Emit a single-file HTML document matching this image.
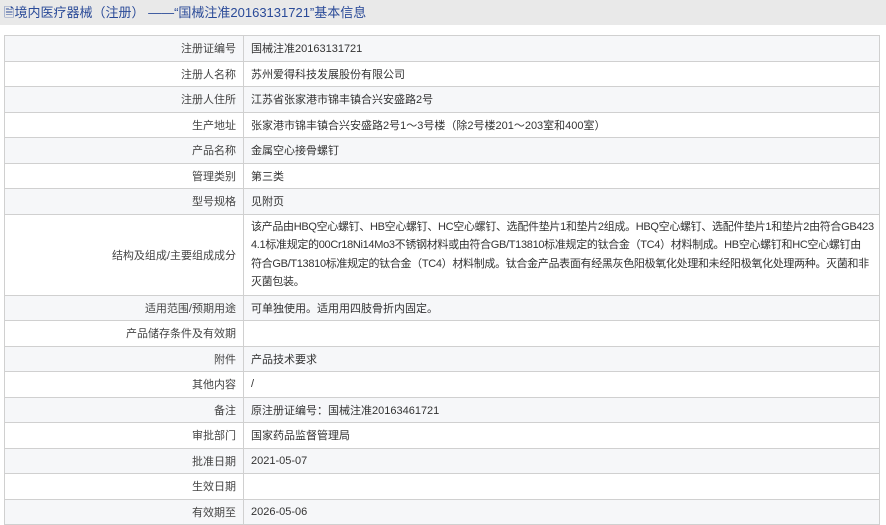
<!DOCTYPE html>
<html><head><meta charset="utf-8"><style>
body{margin:0;width:886px;height:524px;overflow:hidden;background:#fff;font-family:"Liberation Sans","Noto Sans CJK SC",sans-serif;}
.hd{height:25px;background:#e9e9e9;color:#2a4a98;font-size:13px;line-height:25px;padding-left:4px;}
table{position:absolute;left:4px;top:35px;width:876px;border-collapse:collapse;font-size:11px;color:#333;table-layout:fixed;}
td{border:1px solid #d0d0d0;height:24.5px;padding:0 7px;}
td.l{width:224px;text-align:right;color:#444;}
tr:nth-child(odd){background:#f6f7f9;}
td.m{line-height:18.5px;padding:3px 7px 3px 7px;white-space:nowrap;overflow:hidden;letter-spacing:-0.32px;}
</style></head><body>
<div class="hd">🗎境内医疗器械（注册） ——“国械注准20163131721”基本信息</div>
<table>
<tr><td class="l">注册证编号</td><td>国械注准20163131721</td></tr>
<tr><td class="l">注册人名称</td><td>苏州爱得科技发展股份有限公司</td></tr>
<tr><td class="l">注册人住所</td><td>江苏省张家港市锦丰镇合兴安盛路2号</td></tr>
<tr><td class="l">生产地址</td><td>张家港市锦丰镇合兴安盛路2号1～3号楼（除2号楼201～203室和400室）</td></tr>
<tr><td class="l">产品名称</td><td>金属空心接骨螺钉</td></tr>
<tr><td class="l">管理类别</td><td>第三类</td></tr>
<tr><td class="l">型号规格</td><td>见附页</td></tr>
<tr><td class="l">结构及组成/主要组成成分</td><td class="m">该产品由HBQ空心螺钉、HB空心螺钉、HC空心螺钉、选配件垫片1和垫片2组成。HBQ空心螺钉、选配件垫片1和垫片2由符合GB423<br>4.1标准规定的00Cr18Ni14Mo3不锈钢材料或由符合GB/T13810标准规定的钛合金（TC4）材料制成。HB空心螺钉和HC空心螺钉由<br>符合GB/T13810标准规定的钛合金（TC4）材料制成。钛合金产品表面有经黑灰色阳极氧化处理和未经阳极氧化处理两种。灭菌和非<br>灭菌包装。</td></tr>
<tr><td class="l">适用范围/预期用途</td><td>可单独使用。适用用四肢骨折内固定。</td></tr>
<tr><td class="l">产品储存条件及有效期</td><td></td></tr>
<tr><td class="l">附件</td><td>产品技术要求</td></tr>
<tr><td class="l">其他内容</td><td>/</td></tr>
<tr><td class="l">备注</td><td>原注册证编号：国械注准20163461721</td></tr>
<tr><td class="l">审批部门</td><td>国家药品监督管理局</td></tr>
<tr><td class="l">批准日期</td><td>2021-05-07</td></tr>
<tr><td class="l">生效日期</td><td></td></tr>
<tr><td class="l">有效期至</td><td>2026-05-06</td></tr>
</table>
</body></html>
